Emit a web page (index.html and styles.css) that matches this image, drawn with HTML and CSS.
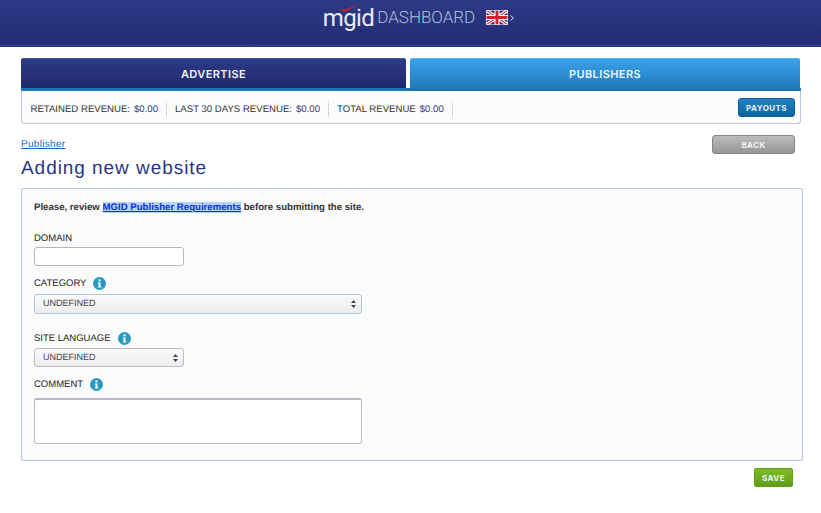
FILE: index.html
```html
<!DOCTYPE html>
<html lang="en">
<head>
<meta charset="utf-8">
<title>Adding new website</title>
<link rel="stylesheet" href="styles.css">
</head>
<body>
<header class="top">
  <div class="brand">
    <span class="logo">mgid<svg class="tick" width="22" height="9" viewBox="0 0 22 9"><path d="M0 5 L7 8 L21 0 L7 5.5 Z" fill="#c8203c"/></svg></span>
    <span class="dash">DASHBOARD</span>
    <svg class="flag" width="22" height="15" viewBox="0 0 60 40"><rect width="60" height="40" fill="#24307a"/><path d="M0 0 L60 40 M60 0 L0 40" stroke="#fff" stroke-width="9"/><path d="M0 0 L60 40 M60 0 L0 40" stroke="#d0202c" stroke-width="3"/><path d="M30 0 V40 M0 20 H60" stroke="#fff" stroke-width="14"/><path d="M30 0 V40 M0 20 H60" stroke="#d0202c" stroke-width="8"/><rect x="0.75" y="0.75" width="58.5" height="38.5" fill="none" stroke="#fff" stroke-width="1.5"/></svg>
    <svg class="caret" width="4" height="6" viewBox="0 0 4 6"><path d="M0.5 0.5 L3.5 3 L0.5 5.5" fill="none" stroke="#d8dcf0" stroke-width="1"/></svg>
  </div>
</header>
<main class="wrap">
  <nav class="tabs">
    <a class="tab tab-dark">ADVERTISE</a>
    <a class="tab tab-blue">PUBLISHERS</a>
  </nav>
  <section class="stats">
    <div class="stat">RETAINED REVENUE: <b>$0.00</b></div>
    <div class="stat">LAST 30 DAYS REVENUE: <b>$0.00</b></div>
    <div class="stat">TOTAL REVENUE <b>$0.00</b></div>
    <button class="btn btn-payouts">PAYOUTS</button>
  </section>
  <div class="crumbs">
    <a class="crumb" href="#">Publisher</a>
    <button class="btn btn-back">BACK</button>
  </div>
  <h1 class="title">Adding new website</h1>
  <form class="panel">
    <p class="note">Please, review <a href="#" class="req">MGID Publisher Requirements</a> before submitting the site.</p>
    <label class="lab lab-domain">DOMAIN</label>
    <input class="field field-s" type="text">
    <label class="lab lab-cat">CATEGORY <svg class="info" width="13" height="13" viewBox="0 0 13 13"><circle cx="6.5" cy="6.5" r="6.5" fill="#2a9ac0"/><rect x="5.5" y="2.4" width="2" height="2" fill="#fff"/><path d="M4.8 5.5 H7.5 V9.6 H8.4 V10.6 H4.8 V9.6 H5.6 V6.5 H4.8 Z" fill="#fff"/></svg></label>
    <div class="sel sel-l">UNDEFINED<svg class="updown" width="5" height="8" viewBox="0 0 5 8"><path d="M2.5 0 L5 3 H0 Z M2.5 8 L5 5 H0 Z" fill="#444"/></svg></div>
    <label class="lab lab-lang">SITE LANGUAGE <svg class="info" width="13" height="13" viewBox="0 0 13 13"><circle cx="6.5" cy="6.5" r="6.5" fill="#2a9ac0"/><rect x="5.5" y="2.4" width="2" height="2" fill="#fff"/><path d="M4.8 5.5 H7.5 V9.6 H8.4 V10.6 H4.8 V9.6 H5.6 V6.5 H4.8 Z" fill="#fff"/></svg></label>
    <div class="sel sel-s">UNDEFINED<svg class="updown" width="5" height="8" viewBox="0 0 5 8"><path d="M2.5 0 L5 3 H0 Z M2.5 8 L5 5 H0 Z" fill="#444"/></svg></div>
    <label class="lab lab-com">COMMENT <svg class="info" width="13" height="13" viewBox="0 0 13 13"><circle cx="6.5" cy="6.5" r="6.5" fill="#2a9ac0"/><rect x="5.5" y="2.4" width="2" height="2" fill="#fff"/><path d="M4.8 5.5 H7.5 V9.6 H8.4 V10.6 H4.8 V9.6 H5.6 V6.5 H4.8 Z" fill="#fff"/></svg></label>
    <textarea class="area"></textarea>
  </form>
  <div class="actions"><button class="btn btn-save">SAVE</button></div>
</main>
</body>
</html>
```
FILE: styles.css
```css
* { box-sizing: border-box; }
html, body { margin: 0; height: 513px; overflow: hidden; background: #fff; }
body { font-family: "Liberation Sans", Arial, sans-serif; color: #222; font-size: 10px; text-rendering: geometricPrecision; }
.top { height: 47px; background: linear-gradient(#2d3a85, #222d72); border-bottom: 3px solid #2f3a8c; display: flex; justify-content: center; }
.brand { display: flex; align-items: center; height: 35px; margin-left: 16px; }
.logo { position: relative; font-family: "Roboto", sans-serif; font-size: 24px; font-weight: 400; letter-spacing: -0.6px; color: #e8ebf6; line-height: 30px; }
.tick { position: absolute; left: 15px; top: 1px; }
.dash { font-family: "Roboto", sans-serif; font-weight: 300; font-size: 17px; color: #b4bade; margin-left: 3px; }
.flag { margin-left: 11px; }
.caret { margin-left: 2px; }
.wrap { padding: 11px 0 0 21px; width: 804px; }
.tabs { display: flex; gap: 4px; height: 33px; width: 780px; background: linear-gradient(transparent 30px, #1a76b8 30px); }
.tab { height: 30px; display: flex; align-items: center; justify-content: center; font-family: "Inter", sans-serif; font-weight: 600; font-size: 11px; letter-spacing: 0.4px; color: #f0f4fa; border-radius: 2px 2px 0 0; }
.tab-dark { width: 385px; background: linear-gradient(#2f3a86, #1f2a6c); border-top: 1px solid #48539c; }
.tab-blue { width: 390px; height: 33px; padding-bottom: 3px; background: linear-gradient(#3aa2ea 0, #1f78b8 30px, #1a6fac 33px); border-top: 1px solid #55b4ee; }
.stats { width: 780px; height: 33px; border: 1px solid #bccbe0; border-top: 0; border-radius: 0 0 3px 3px; background: #fcfcfd; display: flex; align-items: center; padding: 4px 5px 0 8.5px; font-size: 9.6px; color: #333; }
.stat { height: 15px; display: flex; align-items: center; gap: 4px; padding-right: 8px; margin-right: 8px; border-right: 1px dotted #a9b6d2; }
.stat b { font-weight: 400; color: #2c3680; }
.btn { font-family: "Inter", sans-serif; font-weight: 700; font-size: 8px; letter-spacing: 0.4px; color: #eef3f8; padding: 0; cursor: pointer; }
.btn-payouts { margin-left: auto; width: 57px; height: 19px; border: 1px solid #0f5c96; border-radius: 3px; background: linear-gradient(#2383c6, #0d639f); margin-top: -3px; }
.crumbs { display: flex; justify-content: space-between; align-items: flex-start; height: 30px; padding: 11px 6px 0 0; width: 780px; }
.crumb { font-size: 10px; letter-spacing: 0.3px; color: #1f5fc0; margin-top: 4px; }
.btn-back { width: 83px; height: 19px; border: 1px solid #85878a; border-radius: 3px; background: linear-gradient(#bcbcbc, #969696); }
.title { margin: 3px 0 0; font-weight: 400; font-size: 19px; letter-spacing: 0.95px; line-height: 24px; color: #2c3680; height: 24px; }
.panel { margin-top: 7px; width: 782px; height: 273px; border: 1px solid #b6c6de; border-radius: 2px; background: #fbfbfc; padding: 13px 12px 0; display: flex; flex-direction: column; align-items: flex-start; }
.note { margin: 0; font-size: 9.63px; font-weight: 700; line-height: 11px; color: #333; }
.req { color: #0a2ee0; background: #b5d5fb; }
.lab { font-size: 9.5px; color: #222; display: flex; align-items: center; gap: 7px; line-height: 13px; }
.lab-domain { margin-top: 19px; }
.lab-cat { margin-top: 11px; }
.lab-lang { margin-top: 18px; }
.lab-com { margin-top: 11px; }
.info { display: block; }
.field { margin-top: 2px; height: 19px; border: 1px solid #b4b4c2; border-radius: 3px; background: #fff; padding: 0; }
.field-s { width: 150px; }
.sel { position: relative; height: 20px; margin-top: 4px; border: 1px solid #b4c4da; border-radius: 3px; background: linear-gradient(#fbfbfb, #ececec); font-size: 9px; line-height: 16px; padding-left: 8px; color: #444; }
.lab-lang + .sel { margin-top: 3px; }
.sel-l { width: 328px; }
.sel-s { width: 150px; height: 19px; border-color: #b8bcc8; }
.updown { position: absolute; right: 5px; top: 5px; }
.area { margin-top: 7px; width: 328px; height: 46px; border: 1px solid #b8b8c6; border-top-width: 2px; border-radius: 3px; background: #fff; resize: none; padding: 0; display: block; }
.actions { width: 772px; display: flex; justify-content: flex-end; margin-top: 7px; }
.btn-save { width: 39px; height: 19px; border: 1px solid #5f9f14; border-radius: 2px; background: linear-gradient(#7fba2c, #5f9e18); }
```
